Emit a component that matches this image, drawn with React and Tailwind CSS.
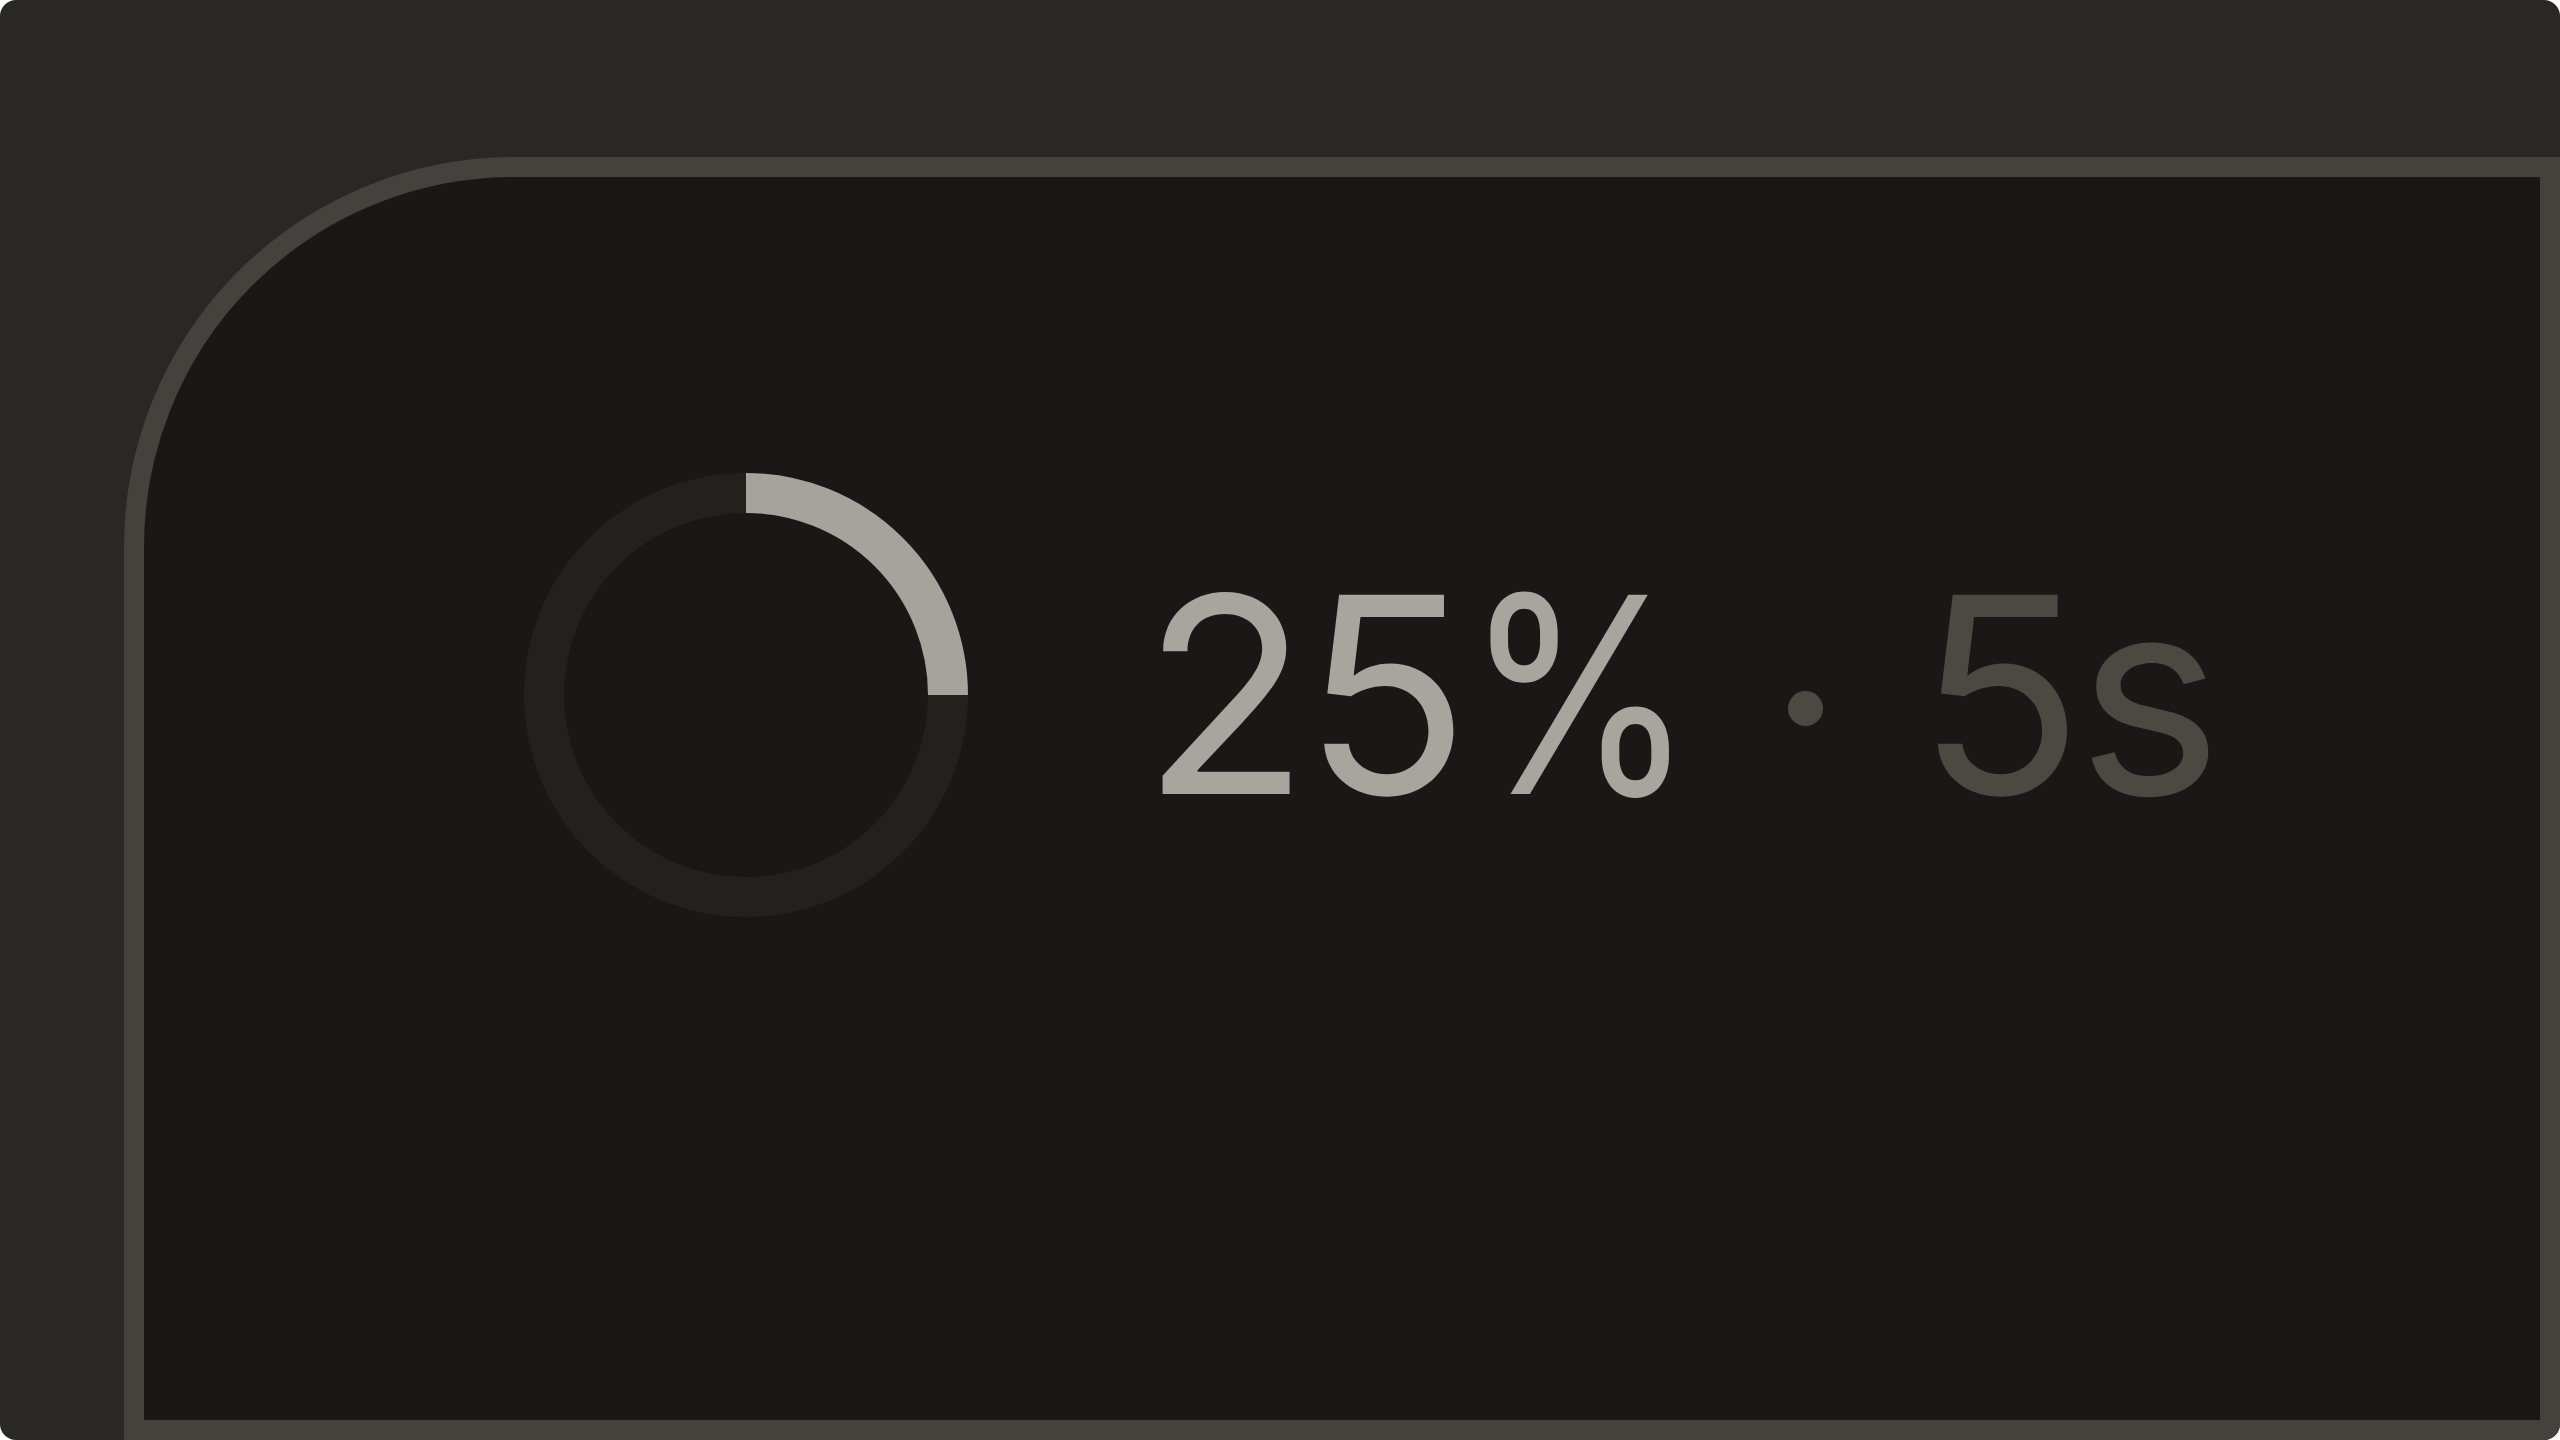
import React from "react";

const RING = 444;
const STROKE = 40;

function ProgressRing({ value }) {
  const r = (RING - STROKE) / 2;
  const c = RING / 2;
  const angle = (value / 100) * Math.PI * 2;
  const x = c + r * Math.sin(angle);
  const y = c - r * Math.cos(angle);
  const large = value > 50 ? 1 : 0;

  return (
    <svg width={RING} height={RING} viewBox={`0 0 ${RING} ${RING}`} className="shrink-0">
      <circle cx={c} cy={c} r={r} fill="none" stroke="#22211e" strokeWidth={STROKE} />
      <path
        d={`M ${c} ${c - r} A ${r} ${r} 0 ${large} 1 ${x} ${y}`}
        fill="none"
        stroke="#a6a29c"
        strokeWidth={STROKE}
        strokeLinecap="butt"
      />
    </svg>
  );
}

export default function App() {
  return (
    <div className="w-[2560px] h-[1440px] bg-white">
      <div className="w-full h-full rounded-2xl overflow-hidden bg-[#292825] flex flex-col pt-[157px] pl-[124px]">
        <div className="flex-1 border-[20px] border-[#45423d] rounded-tl-[390px] bg-[#191817]">
          <div className="flex items-center mt-[296px] pl-[380px] h-[444px]">
            <ProgressRing value={25} />
            <div
              className="flex items-center ml-[174px] leading-none text-[274px] tracking-[-6px]"
              style={{ fontFamily: "Inter, 'Liberation Sans', sans-serif" }}
            >
              <span className="text-[#a8a49e]">
                25
                <span className="inline-block scale-x-[0.86] origin-left -mr-[29px]">%</span>
              </span>
              <div className="w-[35px] h-[35px] rounded-full bg-[#4b4942] ml-[90px] mr-[94px] mt-[26px]" />
              <span className="text-[#4b4942]">5s</span>
            </div>
          </div>
        </div>
      </div>
    </div>
  );
}
